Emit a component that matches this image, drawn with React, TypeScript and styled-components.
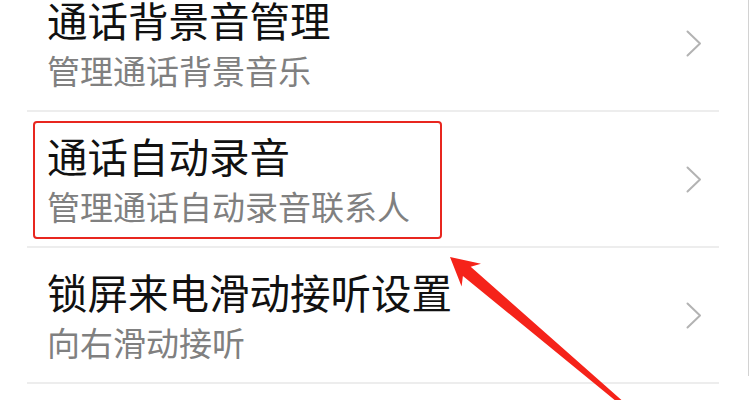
import React from "react";
import styled, { createGlobalStyle } from "styled-components";

const GlobalStyle = createGlobalStyle`
  html, body {
    margin: 0;
    padding: 0;
    background: #fff;
  }
  body {
    font-family: "Noto Sans CJK SC", "Noto Sans", sans-serif;
  }
`;

const Page = styled.div`
  position: relative;
  width: 750px;
  height: 400px;
  overflow: hidden;
  background: #fff;
`;

const Screen = styled.div`
  width: 748px;
  height: 100%;
  border-right: 1px solid #d2d2d2;
  background: #fff;
`;

const List = styled.ul`
  list-style: none;
  margin: -24px 29px 0 27px;
  padding: 0;
`;

const Row = styled.li`
  display: flex;
  align-items: center;
  justify-content: space-between;
  height: 136px;
  box-sizing: border-box;
  padding: 0 17px 0 20px;
  border-bottom: 2px solid #ededed;
`;

const TextBlock = styled.div<{ $marked?: boolean }>`
  position: relative;
  display: flex;
  flex-direction: column;

  ${(props) =>
    props.$marked &&
    `
    &::after {
      content: "";
      position: absolute;
      left: -14px;
      top: -11px;
      width: 409px;
      height: 118px;
      box-sizing: border-box;
      border: 2.5px solid #e8261f;
      border-radius: 4px;
    }
  `}
`;

const Title = styled.div`
  font-size: 40.5px;
  line-height: 48px;
  color: #111;
  white-space: nowrap;
`;

const Subtitle = styled.div`
  font-size: 33px;
  line-height: 40px;
  margin-top: 6px;
  color: #808080;
  white-space: nowrap;
`;

const Chevron = styled.svg`
  flex-shrink: 0;
  width: 16px;
  height: 27px;
`;

const Overlay = styled.svg`
  position: absolute;
  left: 0;
  top: 0;
  pointer-events: none;
`;

interface Item {
  title: string;
  desc: string;
  marked?: boolean;
}

const items: Item[] = [
  { title: "通话背景音管理", desc: "管理通话背景音乐" },
  { title: "通话自动录音", desc: "管理通话自动录音联系人", marked: true },
  { title: "锁屏来电滑动接听设置", desc: "向右滑动接听" },
];

function Arrow() {
  return (
    <Chevron viewBox="0 0 16 27">
      <polyline
        points="1.5,1.5 14,13.5 1.5,25.5"
        fill="none"
        stroke="#b3b3b3"
        strokeWidth="2"
        strokeLinecap="round"
        strokeLinejoin="round"
      />
    </Chevron>
  );
}

function App() {
  return (
    <Page>
      <GlobalStyle />
      <Screen>
        <List>
          {items.map((item) => (
            <Row key={item.title}>
              <TextBlock $marked={item.marked}>
                <Title>{item.title}</Title>
                <Subtitle>{item.desc}</Subtitle>
              </TextBlock>
              <Arrow />
            </Row>
          ))}
        </List>
      </Screen>
      <Overlay width="750" height="400" viewBox="0 0 750 400">
        <polygon
          points="450,257 481,263.7 470.7,266.7 628,405.8 625.4,408.8 462.9,275.9 461.6,286.5"
          fill="#f5231a"
        />
      </Overlay>
    </Page>
  );
}

export default App;
